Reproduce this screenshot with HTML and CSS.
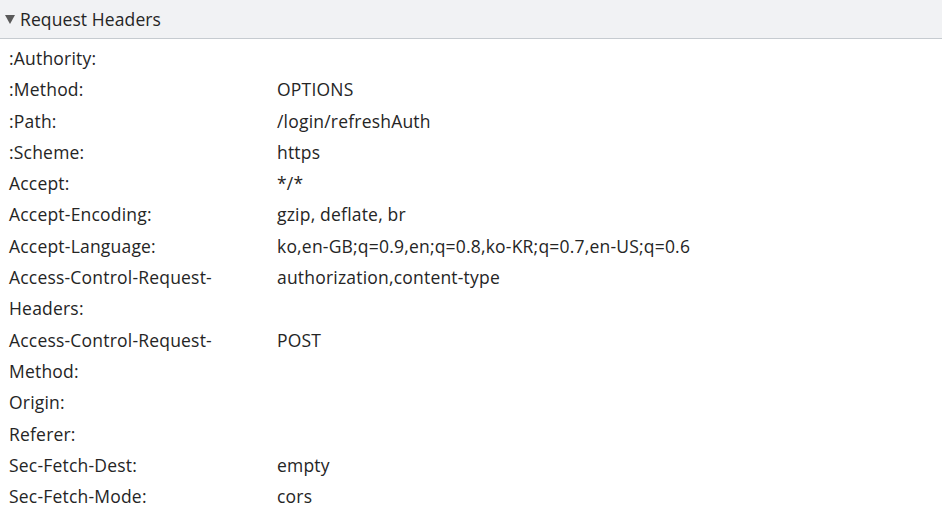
FILE: index.html
```html
<!DOCTYPE html>
<html>
<head>
<meta charset="utf-8">
<link rel="stylesheet" href="styles.css">
</head>
<body>
<div class="panel">
  <div class="header"><span class="tri"></span><span class="title">Request Headers</span></div>
  <div class="rows">
    <div class="key">:Authority:</div><div class="val"></div>
    <div class="key">:Method:</div><div class="val">OPTIONS</div>
    <div class="key">:Path:</div><div class="val">/login/refreshAuth</div>
    <div class="key">:Scheme:</div><div class="val">https</div>
    <div class="key">Accept:</div><div class="val">*/*</div>
    <div class="key">Accept-Encoding:</div><div class="val">gzip, deflate, br</div>
    <div class="key">Accept-Language:</div><div class="val">ko,en-GB;q=0.9,en;q=0.8,ko-KR;q=0.7,en-US;q=0.6</div>
    <div class="key">Access-Control-Request-<br>Headers:</div><div class="val">authorization,content-type</div>
    <div class="key">Access-Control-Request-<br>Method:</div><div class="val">POST</div>
    <div class="key">Origin:</div><div class="val"></div>
    <div class="key">Referer:</div><div class="val"></div>
    <div class="key">Sec-Fetch-Dest:</div><div class="val">empty</div>
    <div class="key">Sec-Fetch-Mode:</div><div class="val">cors</div>
  </div>
</div>
</body>
</html>
```
FILE: styles.css
```css
html, body { margin: 0; padding: 0; background: #fff; }
body {
  font-family: "Open Sans", "Noto Sans", sans-serif;
  font-size: 17.5px;
  color: #252525;
  overflow: hidden;
}
.panel { width: 942px; }
.header {
  height: 39px;
  box-sizing: border-box;
  background: #f1f2f4;
  border-bottom: 1px solid #c6cbd0;
  display: flex;
  align-items: center;
  padding-left: 5px;
}
.tri {
  width: 0; height: 0;
  border-left: 5px solid transparent;
  border-right: 5px solid transparent;
  border-top: 9px solid #5a5a5a;
  margin-right: 5px;
  margin-top: 1px;
}
.title { font-size: 17.5px; color: #252525; letter-spacing: 0.1px; }
.rows {
  display: grid;
  grid-template-columns: 277px 1fr;
  line-height: 31.3px;
  padding-top: 4px;
}
.key { padding-left: 9px; letter-spacing: 0.2px; }
.val { letter-spacing: 0.2px; }
```
